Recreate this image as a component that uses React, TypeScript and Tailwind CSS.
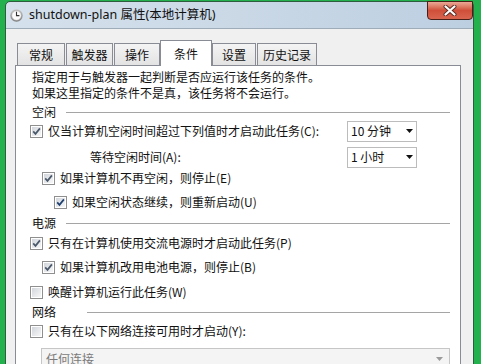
import React from "react";

const Check = ({ checked, blue }: { checked?: boolean; blue?: boolean }) => (
  <div className="w-[13px] h-[13px] shrink-0 border border-[#8f8f8f] bg-white p-[1px]">
    <div className="relative w-full h-full bg-gradient-to-br from-[#d2d6dc] to-[#f7f7f7]">
      {checked && (
        <svg className="absolute inset-0" width="9" height="9" viewBox="0 0 9 9">
          <path d="M1.2 4.4 L3.5 6.9 L7.9 1.4" fill="none" stroke={blue ? "#1f3f70" : "#4a586b"} strokeWidth="1.7" />
        </svg>
      )}
    </div>
  </div>
);

const Arrow = ({ color }: { color: string }) => (
  <svg width="7" height="4" viewBox="0 0 7 4" className="shrink-0">
    <path d="M0 0 H7 L3.5 4 Z" fill={color} />
  </svg>
);

const Combo = ({ text }: { text: string }) => (
  <div className="w-[70px] h-[21px] shrink-0 border border-[#bcbcbc] bg-white flex items-center justify-between pl-[3px] pr-[3px] mr-[33px]">
    <span>{text}</span>
    <Arrow color="#111" />
  </div>
);

const Sep = ({ label, gap }: { label: string; gap: string }) => (
  <div className="flex items-center h-full">
    <span className="ml-[2px]">{label}</span>
    <div className={`flex-1 h-px bg-[#a5a5a5] ${gap}`} />
  </div>
);

const Tab = ({ label, cls, selected }: { label: string; cls: string; selected?: boolean }) => (
  <div
    className={
      selected
        ? `${cls} relative z-10 h-[26px] mb-[-1px] bg-white border border-b-0 border-[#898c95] flex items-center justify-center`
        : `${cls} h-[22px] bg-gradient-to-b from-[#f4f4f4] to-[#e3e3e3] border border-b-0 border-[#898c95] flex items-center justify-center`
    }
  >
    {label}
  </div>
);

export default function App() {
  return (
    <div className="w-[481px] h-[364px] overflow-hidden bg-[#22b14c] pt-[1px] pl-[5px] text-[12px] leading-none text-[#111] font-['Noto_Sans_CJK_SC',sans-serif]">
      <div className="relative w-[469px] h-[420px] border border-[#2d5c3e] rounded-t-[5px] bg-gradient-to-r from-[#d5e1ec] via-[#cad8e6] to-[#bccfe1]">
        {/* title bar */}
        <div className="h-[26px] flex items-center pl-[4px]">
          <svg width="13" height="13" viewBox="0 0 13 13" className="shrink-0">
            <defs>
              <linearGradient id="rim" x1="0" y1="0" x2="0" y2="1">
                <stop offset="0" stopColor="#c9c9c9" />
                <stop offset="1" stopColor="#7d7d7d" />
              </linearGradient>
            </defs>
            <circle cx="6.5" cy="6.5" r="6.2" fill="url(#rim)" />
            <circle cx="6.5" cy="6.5" r="4.8" fill="#fbfbfb" stroke="#9a9a9a" strokeWidth="0.5" />
            <path d="M6.5 2.8 V6.6 H9.4" fill="none" stroke="#333" strokeWidth="1.1" />
          </svg>
          <span className="ml-[6px] text-[12.5px] text-[#111] font-['Noto_Sans','Noto_Sans_CJK_SC',sans-serif] leading-none">
            shutdown-plan 属性(本地计算机)
          </span>
        </div>
        {/* close button */}
        <div className="absolute top-[-1px] right-0 w-[46px] h-[19px] rounded-b-[4px] border border-[#4a1f18] bg-gradient-to-b from-[#eaa996] via-[#cf4f3a] to-[#d9654f] flex items-center justify-center">
          <svg width="14" height="11" viewBox="0 0 14 11">
            <path d="M2.5 1.5 L11.5 9.5 M11.5 1.5 L2.5 9.5" stroke="#5a2a22" strokeWidth="4" strokeLinecap="round" />
            <path d="M2.5 1.5 L11.5 9.5 M11.5 1.5 L2.5 9.5" stroke="#ffffff" strokeWidth="2.2" strokeLinecap="round" />
          </svg>
        </div>
        {/* client */}
        <div className="h-[400px] bg-[#f0f0f0] border-t border-[#9eabb8]">
          <div className="pt-[11px] pl-[11px] flex items-end">
            <Tab label="常规" cls="w-[48px]" />
            <Tab label="触发器" cls="w-[47px] ml-px" />
            <Tab label="操作" cls="w-[46px] ml-px" />
            <Tab label="条件" cls="w-[52px]" selected />
            <Tab label="设置" cls="w-[44px]" />
            <Tab label="历史记录" cls="w-[60px] ml-px" />
          </div>
          <div className="ml-[9px] w-[446px] h-[320px] bg-white border border-[#898c95] pl-[14px] pr-[10px] pt-[2px]">
            <div className="h-[18px] flex items-center ml-[2px]">指定用于与触发器一起判断是否应运行该任务的条件。</div>
            <div className="h-[14px] flex items-center ml-[2px]">如果这里指定的条件不是真，该任务将不会运行。</div>
            <div className="h-[24px]">
              <Sep label="空闲" gap="ml-[10px]" />
            </div>
            <div className="h-[14px] flex items-center">
              <Check checked />
              <span className="ml-[5px] flex-1">仅当计算机空闲时间超过下列值时才启动此任务(C):</span>
              <Combo text="10 分钟" />
            </div>
            <div className="h-[22px] mt-[8px] flex items-center">
              <span className="ml-[60px] flex-1">等待空闲时间(A):</span>
              <Combo text="1 小时" />
            </div>
            <div className="h-[20px] flex items-center">
              <div className="ml-[12px]"><Check checked /></div>
              <span className="ml-[5px]">如果计算机不再空闲，则停止(E)</span>
            </div>
            <div className="h-[28px] flex items-center">
              <div className="ml-[24px]"><Check checked blue /></div>
              <span className="ml-[5px]">如果空闲状态继续，则重新启动(U)</span>
            </div>
            <div className="h-[14px]">
              <Sep label="电源" gap="ml-[10px]" />
            </div>
            <div className="h-[26px] flex items-center">
              <Check checked />
              <span className="ml-[5px]">只有在计算机使用交流电源时才启动此任务(P)</span>
            </div>
            <div className="h-[22px] flex items-center">
              <div className="ml-[12px]"><Check checked /></div>
              <span className="ml-[5px]">如果计算机改用电池电源，则停止(B)</span>
            </div>
            <div className="h-[28px] flex items-center">
              <Check />
              <span className="ml-[5px]">唤醒计算机运行此任务(W)</span>
            </div>
            <div className="h-[12px]">
              <Sep label="网络" gap="ml-[31px]" />
            </div>
            <div className="h-[26px] flex items-center">
              <Check />
              <span className="ml-[5px]">只有在以下网络连接可用时才启动(Y):</span>
            </div>
            <div className="mt-[4px] ml-[11px] h-[22px] border border-[#c6c6c6] bg-[#f4f4f4] flex items-center justify-between pl-[4px] pr-[6px] text-[#7a7a7a]">
              <span>任何连接</span>
              <Arrow color="#9a9a9a" />
            </div>
          </div>
        </div>
      </div>
    </div>
  );
}
